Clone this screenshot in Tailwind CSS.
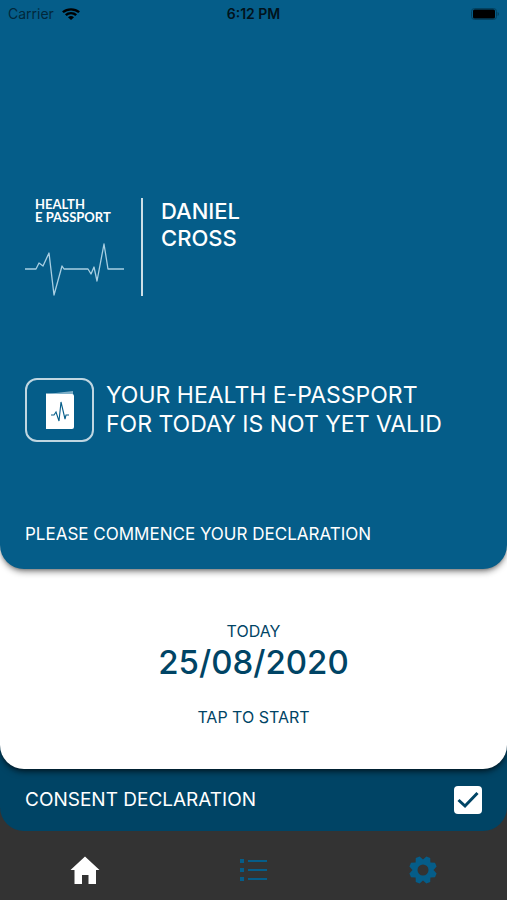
<!DOCTYPE html>
<html lang="en">
<head>
    <meta charset="UTF-8">
    <meta name="viewport" content="width=device-width, initial-scale=1.0">
    <title>Health E Passport</title>
    <script src="https://cdn.jsdelivr.net/npm/@tailwindcss/browser@4"></script>
</head>
<body class="bg-[#333333] font-['Inter',sans-serif]">
    <div class="flex min-h-screen flex-col">
        <main class="flex grow flex-col rounded-b-3xl bg-[#004465]">
            <div class="flex grow flex-col rounded-b-3xl bg-white shadow-md shadow-black/50">

                <!-- Passport status -->
                <section class="flex grow flex-col rounded-b-3xl bg-[#055d89] text-white shadow-md shadow-black/40">
                    <div class="grid h-7 grid-cols-3 items-center px-2 text-sm text-black">
                        <div class="flex items-center gap-2 text-[#02283b]">
                            <span>Carrier</span>
                            <svg class="h-3 w-[18px] text-black" viewBox="0 0 16 12" preserveAspectRatio="none" fill="none" stroke="currentColor" stroke-width="2.2">
                                <path d="M.8 4.3a10.3 10.3 0 0 1 14.4 0M3.4 7.1a6.5 6.5 0 0 1 9.2 0" />
                                <path d="M8 12 5.3 9.3a3.8 3.8 0 0 1 5.4 0z" fill="currentColor" stroke="none" />
                            </svg>
                        </div>
                        <div class="text-center font-semibold text-[#01131c]">6:12 PM</div>
                        <svg class="h-3 w-7 justify-self-end" viewBox="0 0 28 12">
                            <rect x=".5" y=".5" width="25" height="11" rx="3" fill="none" stroke="#03415f" />
                            <rect x="2" y="1.500" width="22" height="9" rx="1.5" fill="#000" />
                            <path d="M26.6 4v4q1.4-.6 1.4-2t-1.4-2z" fill="#03415f" />
                        </svg>
                    </div>

                    <div class="mt-[170px] flex px-[25px]">
                        <div class="flex w-[118px] flex-col border-r-2 border-white/80">
                            <div class="pl-[10px] font-['Lato',sans-serif] text-[13px] leading-[13px] font-bold">HEALTH<br>E PASSPORT</div>
                            <svg class="mt-[18px] h-[54px] w-[100px]" viewBox="0 0 100 54" fill="none" stroke="#a9cfe2" stroke-width="1.3" stroke-linejoin="round">
                                <path d="M0 27h11l3-6 4 3 6-13 5 42 8-29 2 3h24l3 5 3-7 3 14 7-37 4 25h16" />
                            </svg>
                        </div>
                        <h1 class="pl-[18px] text-[22px] leading-[27px] font-medium">DANIEL<br>CROSS</h1>
                    </div>

                    <div class="mt-[82px] flex items-center gap-3 px-[25px]">
                        <div class="flex h-16 w-[69px] shrink-0 items-center justify-center rounded-xl border-2 border-white/75">
                            <svg class="h-10 w-8" viewBox="0 0 32 40">
                                <path d="M3 4 29 1v4H3z" fill="#7fb0c9" />
                                <path d="M2 3.5 16 4h12q2 0 2 2v31q0 2-2 2H2z" fill="#fff" />
                                <path d="M7 25h3l2-3 3 9 2-19 4 17 1-4h3" fill="none" stroke="#055d89" stroke-width="1.1" />
                            </svg>
                        </div>
                        <p class="text-[23px] leading-[29px]">YOUR HEALTH E-PASSPORT<br>FOR TODAY IS NOT YET VALID</p>
                    </div>

                    <p class="mt-auto px-[25px] pb-6 text-[17px] leading-[22px]">PLEASE COMMENCE YOUR DECLARATION</p>
                </section>

                <!-- Start today's declaration -->
                <button type="button" class="flex h-[200px] flex-col items-center pt-[50px] text-[#004465]">
                    <span class="text-base">TODAY</span>
                    <span class="text-[33px] leading-[38px] font-medium">25/08/2020</span>
                    <span class="mt-6 text-base">TAP TO START</span>
                </button>
            </div>

            <label class="flex h-[62px] items-center justify-between px-[25px] text-[19px] text-white">
                <span>CONSENT DECLARATION</span>
                <span class="relative flex">
                    <input type="checkbox" checked class="peer size-7 appearance-none rounded-sm bg-white">
                    <svg class="absolute inset-0 hidden size-7 peer-checked:block" viewBox="0 0 28 28" fill="none" stroke="#004465" stroke-width="3">
                        <path d="m4.5 14 6.5 6L23.500 7" />
                    </svg>
                </span>
            </label>
        </main>

        <nav class="grid h-[69px] grid-cols-3 items-center pt-2 text-[#055d89]">
            <a href="#home" aria-label="Home" class="flex justify-center text-white">
                <svg class="size-8" viewBox="0 0 32 32" fill="currentColor">
                    <path d="M16 2.500 30.500 16H27v14h-7.500v-9h-6.500v9H5.500V16H1.500z" />
                </svg>
            </a>
            <a href="#declarations" aria-label="Declarations" class="flex justify-center">
                <svg class="size-7" viewBox="0 0 28 28" fill="currentColor">
                    <path d="M0 3h4v4H0zM8 4h19v2H8zM0 12h4v4H0zM8 13h19v2H8zM0 21h4v4H0zM8 22h19v2H8z" />
                </svg>
            </a>
            <a href="#settings" aria-label="Settings" class="flex justify-center">
                <svg class="size-7" viewBox="0 0 28 28" fill="currentColor" fill-rule="evenodd">
                    <path d="M14 3.500 17.400.4 21.200 2l.2 4.600 4.600.2 1.600 3.800-3.100 3.400 3.100 3.400-1.600 3.800-4.600.2-.2 4.600-3.800 1.600-3.400-3.100-3.400 3.100L6.800 26l-.2-4.600-4.600-.2L.4 17.400 3.500 14 .4 10.600 2 6.800l4.600-.2.2-4.600L10.600.4zM14 8.500a5.500 5.500 0 1 0 0 11 5.500 5.500 0 0 0 0-11z" />
                </svg>
            </a>
        </nav>
    </div>
</body>
</html>
